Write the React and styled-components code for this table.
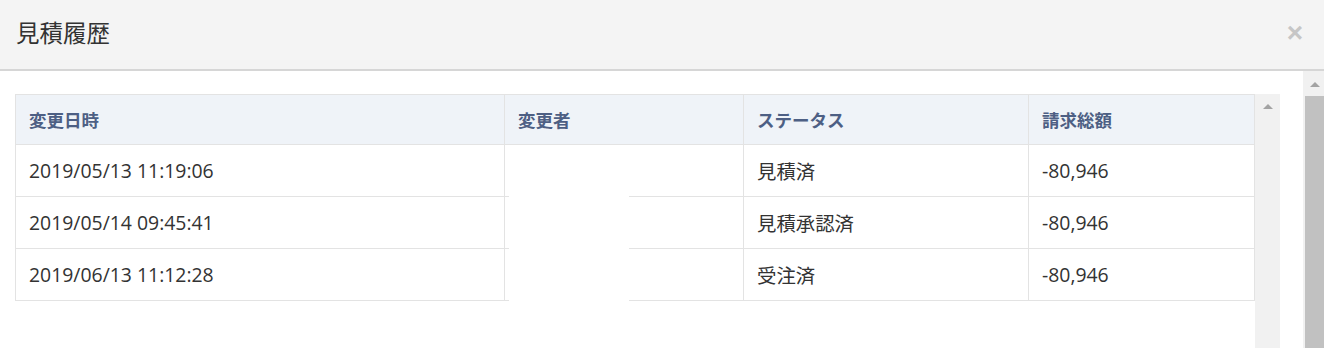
import React from 'react';
import styled, { createGlobalStyle } from 'styled-components';

const GlobalStyle = createGlobalStyle`
  html, body {
    margin: 0;
    height: 100%;
    overflow: hidden;
    background: #ffffff;
  }
  body {
    font-family: "Open Sans", "Noto Sans CJK JP", sans-serif;
    color: #333333;
  }
`;

const COLUMNS = [489, 239, 285, 226];

const rows = [
  { date: '2019/05/13 11:19:06', user: '', status: '見積済', amount: '-80,946' },
  { date: '2019/05/14 09:45:41', user: '', status: '見積承認済', amount: '-80,946' },
  { date: '2019/06/13 11:12:28', user: '', status: '受注済', amount: '-80,946' },
];

const Modal = styled.div`
  display: flex;
  flex-direction: column;
  height: 348px;
  width: 1324px;
`;

const Header = styled.div`
  display: flex;
  align-items: center;
  justify-content: space-between;
  height: 71px;
  padding: 0 21px 0 16px;
  background: #f4f4f4;
  border-bottom: 2px solid #d6d6d6;
  box-sizing: border-box;
  flex-shrink: 0;
`;

const Title = styled.h4`
  margin: 0 0 5px;
  font-family: "Noto Sans CJK JP", sans-serif;
  font-size: 23.5px;
  font-weight: 400;
  color: #333333;
`;

const CloseButton = styled.span`
  font-family: "Liberation Sans", sans-serif;
  font-size: 28px;
  font-weight: 700;
  line-height: 1;
  color: #c6c6c6;
  margin-bottom: 4px;
`;

const Body = styled.div`
  display: flex;
  flex: 1;
  min-height: 0;
`;

const Content = styled.div`
  display: flex;
  flex: 1;
  padding: 23px 0 0 15px;
`;

const TableArea = styled.div`
  position: relative;
  width: 1240px;
  align-self: flex-start;
`;

const Grid = styled.div`
  display: grid;
  grid-template-columns: ${COLUMNS.map((w) => `${w}px`).join(' ')};
  border-top: 1px solid #e3e3e3;
  border-left: 1px solid #e3e3e3;
`;

const Cell = styled.div`
  display: flex;
  align-items: center;
  box-sizing: border-box;
  height: ${(p) => (p.$head ? 50 : 52)}px;
  padding: 0 0 0 13px;
  border-right: 1px solid #e3e3e3;
  border-bottom: 1px solid #e3e3e3;
  background: ${(p) => (p.$head ? '#eff3f8' : '#ffffff')};
  font-size: ${(p) => (p.$head ? 17.5 : 19.4)}px;
  font-weight: ${(p) => (p.$head ? 700 : 400)};
  color: ${(p) => (p.$head ? '#4d5f84' : '#333333')};
  font-family: ${(p) => (p.$jp ? '"Noto Sans CJK JP", sans-serif' : '"Open Sans", "Noto Sans CJK JP", sans-serif')};
  white-space: nowrap;
`;

/* redacted name block over the 変更者 column */
const Mask = styled.div`
  position: absolute;
  left: 494px;
  top: 51px;
  width: 120px;
  height: 157px;
  background: #ffffff;
`;

const ScrollTrack = styled.div`
  display: flex;
  flex-direction: column;
  align-items: center;
  width: ${(p) => p.$width}px;
  background: #f1f1f1;
  padding-top: ${(p) => p.$arrowTop}px;
  box-sizing: border-box;
  flex-shrink: 0;
`;

const UpArrow = styled.div`
  width: 0;
  height: 0;
  border-left: 5px solid transparent;
  border-right: 5px solid transparent;
  border-bottom: 5px solid #a3a3a3;
`;

const Gap = styled.div`
  width: 23px;
  flex-shrink: 0;
`;

const OuterTrack = styled(ScrollTrack)`
  align-items: stretch;
`;

const OuterArrowRow = styled.div`
  display: flex;
  justify-content: center;
  padding-left: 3px;
`;

const Thumb = styled.div`
  flex: 1;
  margin: 9px 0 0 2px;
  background: #c1c1c1;
`;

export default function App() {
  return (
    <>
      <GlobalStyle />
      <Modal>
        <Header>
          <Title>見積履歴</Title>
          <CloseButton>×</CloseButton>
        </Header>
        <Body>
          <Content>
            <TableArea>
              <Grid>
                <Cell $head $jp>変更日時</Cell>
                <Cell $head $jp>変更者</Cell>
                <Cell $head $jp>ステータス</Cell>
                <Cell $head $jp>請求総額</Cell>
                {rows.map((r) => (
                  <React.Fragment key={r.date}>
                    <Cell>{r.date}</Cell>
                    <Cell>{r.user}</Cell>
                    <Cell $jp>{r.status}</Cell>
                    <Cell>{r.amount}</Cell>
                  </React.Fragment>
                ))}
              </Grid>
              <Mask />
            </TableArea>
            <ScrollTrack $width={25} $arrowTop={10}>
              <UpArrow />
            </ScrollTrack>
            <Gap />
          </Content>
          <OuterTrack $width={21} $arrowTop={11}>
            <OuterArrowRow>
              <UpArrow />
            </OuterArrowRow>
            <Thumb />
          </OuterTrack>
        </Body>
      </Modal>
    </>
  );
}
